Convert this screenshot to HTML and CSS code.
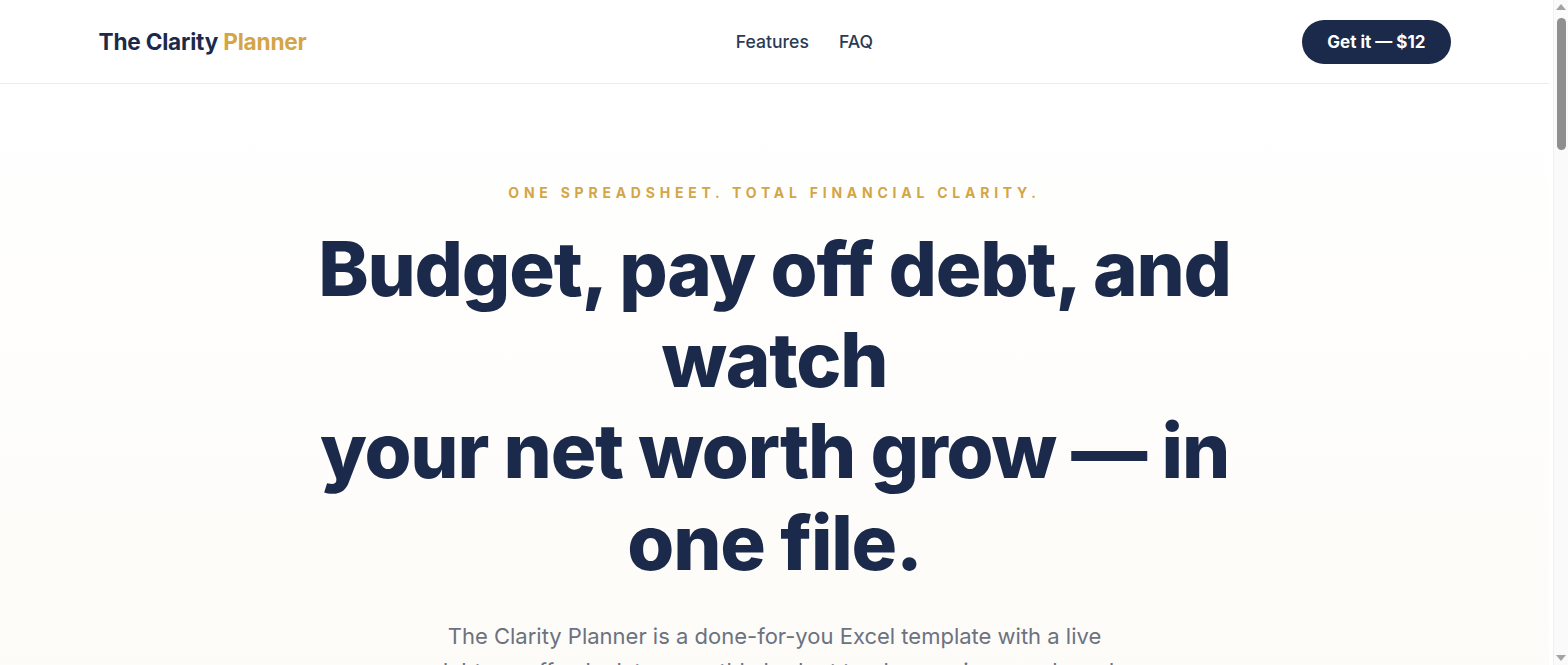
FILE: index.html
```html
<!DOCTYPE html>
<html lang="en">
<head>
<meta charset="utf-8">
<title>The Clarity Planner</title>
<link rel="stylesheet" href="styles.css">
</head>
<body>
<div class="page">
<header class="site-header">
  <div class="container header-inner">
    <a class="logo" href="#">The Clarity <span class="logo-accent">Planner</span></a>
    <nav class="nav">
      <a href="#features">Features</a>
      <a href="#faq">FAQ</a>
    </nav>
    <a class="btn-primary" href="#buy">Get it — $12</a>
  </div>
</header>
<main>
  <section class="hero">
    <div class="container hero-inner">
      <p class="eyebrow">One spreadsheet. Total financial clarity.</p>
      <h1 class="hero-title">Budget, pay off debt, and watch<br>your net worth grow — in one file.</h1>
      <p class="hero-sub">The Clarity Planner is a done-for-you Excel template with a live debt payoff calculator, monthly budget tracker, savings goals and a net worth dashboard — all connected, all automatic.</p>
      <div class="hero-actions">
        <a class="btn-primary btn-lg" href="#buy">Get it — $12</a>
      </div>
    </div>
  </section>
  <section class="features" id="features">
    <div class="container">
      <h2>Everything in one place</h2>
    </div>
  </section>
</main>
</div>
<div class="scrollbar" aria-hidden="true">
  <span class="sb-arrow sb-up"></span>
  <span class="sb-thumb"></span>
  <span class="sb-arrow sb-down"></span>
</div>
</body>
</html>
```
FILE: styles.css
```css
* { box-sizing: border-box; }
html, body { margin: 0; padding: 0; }
body {
  font-family: Inter, "Noto Sans", sans-serif;
  color: #1b2a4a;
  background: #ffffff;
}
.page { margin-right: 19px; }
a { text-decoration: none; color: inherit; }
.container {
  max-width: 1400px;
  margin: 0 auto;
  padding: 0 24px;
}
.site-header {
  background: #ffffff;
  border-bottom: 1px solid #eeebe4;
}
.header-inner {
  height: 83px;
  display: flex;
  align-items: center;
  justify-content: space-between;
}
.logo {
  font-size: 22.6px;
  font-weight: 700;
  color: #1b2a4a;
  letter-spacing: -0.2px;
}
.logo-accent { color: #d4a545; }
.nav {
  display: flex;
  gap: 30px;
}
.nav a {
  font-size: 17.6px;
  font-weight: 500;
  color: #2b3a55;
}
.btn-primary {
  display: inline-flex;
  align-items: center;
  justify-content: center;
  height: 44px;
  padding: 0 25px;
  border-radius: 999px;
  background: #1b2a4a;
  color: #ffffff;
  font-size: 17px;
  font-weight: 700;
}
.hero {
  background: linear-gradient(180deg, #ffffff 0%, #fcfaf5 100%);
  padding: 99px 0 80px;
}
.hero-inner {
  display: flex;
  flex-direction: column;
  align-items: center;
  text-align: center;
}
.eyebrow {
  margin: 0 0 20px;
  font-size: 14px;
  font-weight: 700;
  letter-spacing: 0.34em;
  text-transform: uppercase;
  color: #d4a545;
  line-height: 20px;
}
.hero-title {
  margin: 0;
  max-width: 980px;
  font-size: 76px;
  line-height: 1.2;
  font-weight: 800;
  letter-spacing: -1.2px;
  color: #1b2a4a;
}
.hero-sub {
  margin: 31px 0 0;
  max-width: 680px;
  font-size: 22px;
  line-height: 1.6;
  color: #6b7280;
}
.hero-actions { margin-top: 36px; }
.btn-lg { height: 52px; padding: 0 32px; font-size: 17px; }
.features { padding: 80px 0; background: #ffffff; }
.features h2 { text-align: center; font-size: 40px; margin: 0; }

/* decorative classic scrollbar */
.scrollbar {
  position: fixed;
  top: 0;
  right: 0;
  width: 15px;
  height: 100vh;
  background: #fafafa;
  border-left: 1px solid #f0f0f0;
  display: flex;
  flex-direction: column;
  align-items: center;
}
.sb-arrow {
  width: 0;
  height: 0;
  border-left: 5px solid transparent;
  border-right: 5px solid transparent;
}
.sb-up {
  margin-top: 4px;
  border-bottom: 6px solid #a3a3a3;
}
.sb-thumb {
  margin-top: 8px;
  width: 9px;
  height: 132px;
  border-radius: 5px;
  background: #8f8f8f;
}
.sb-down {
  margin-top: auto;
  margin-bottom: 4px;
  border-top: 6px solid #a3a3a3;
}
```
